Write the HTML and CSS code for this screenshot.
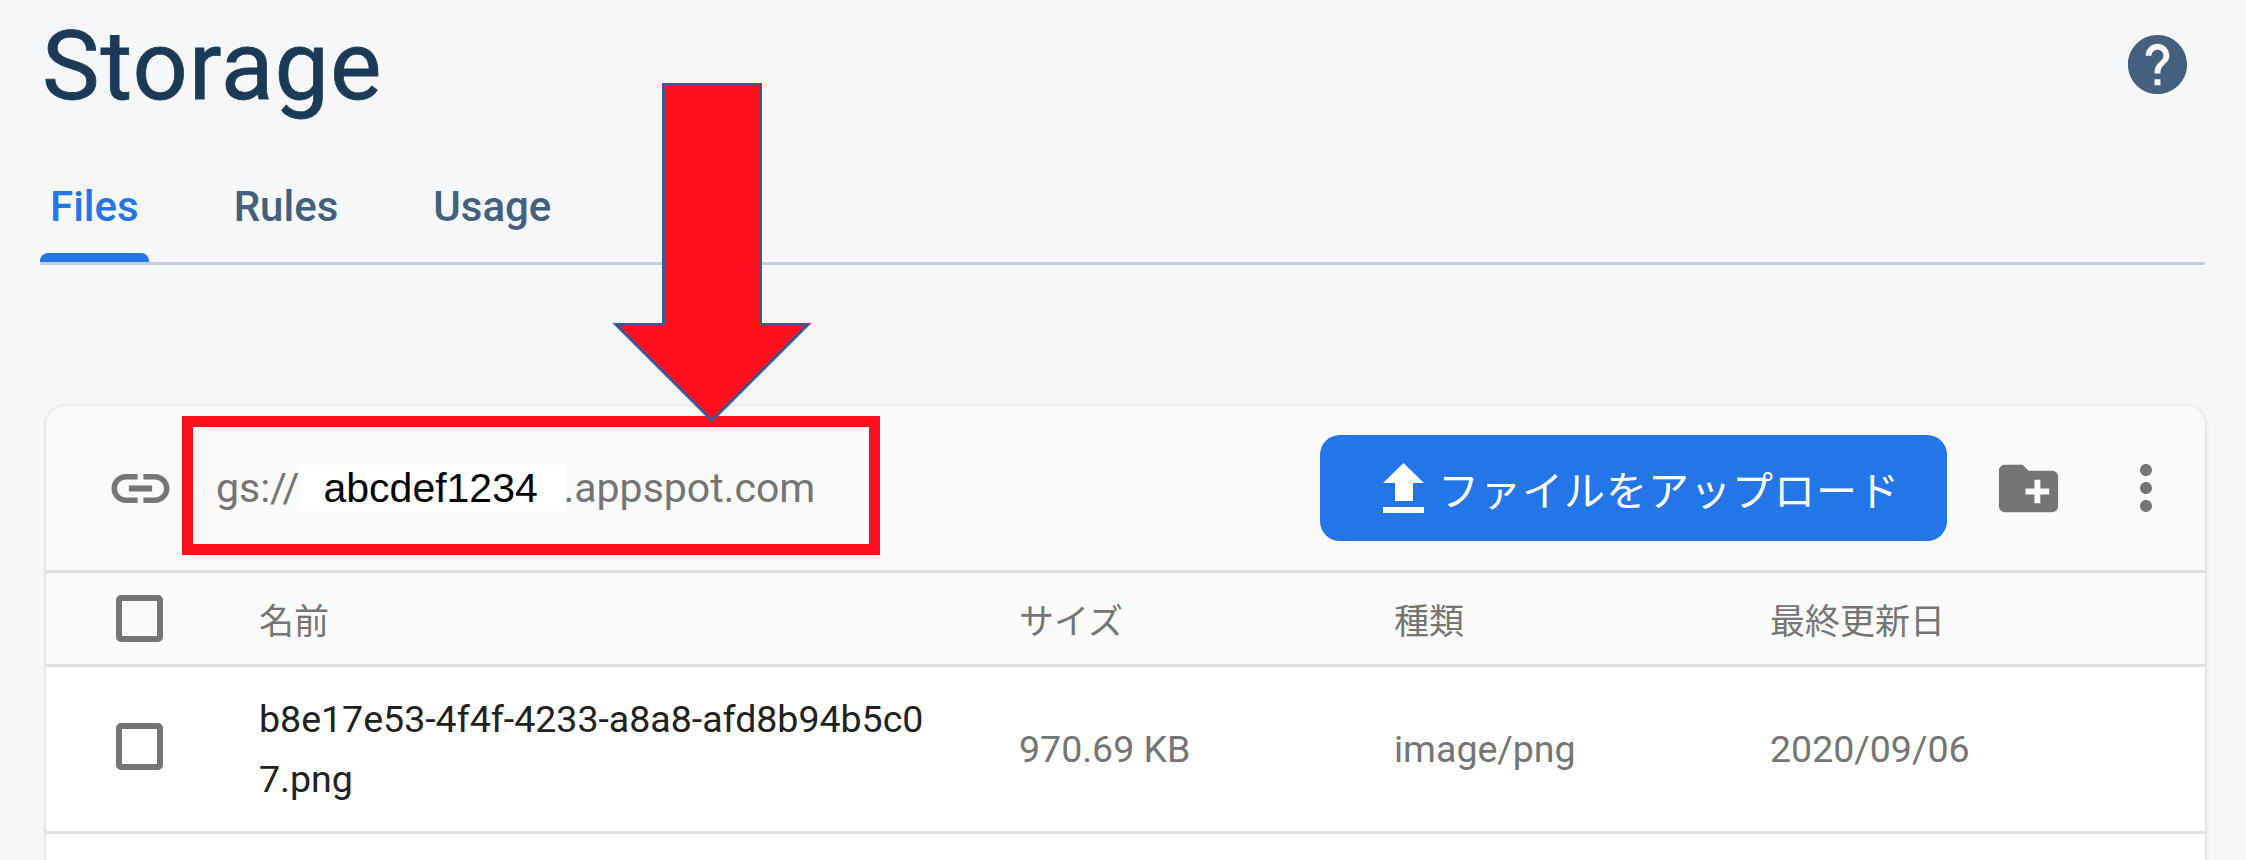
FILE: index.html
```html
<!DOCTYPE html>
<html lang="ja">
<head>
    <meta charset="UTF-8">
    <title>Storage</title>
    <link rel="stylesheet" href="styles.css">
</head>
<body>
    <div class="page">
        <div class="title-row">
            <h1>Storage</h1>
            <svg class="help-icon" viewBox="0 0 24 24"><path d="M12 2C6.48 2 2 6.48 2 12s4.48 10 10 10 10-4.48 10-10S17.52 2 12 2zm1 17h-2v-2h2v2zm2.07-7.75l-.9.92C13.45 12.9 13 13.5 13 15h-2v-.5c0-1.1.45-2.1 1.17-2.83l1.24-1.26c.37-.36.59-.86.59-1.41 0-1.1-.9-2-2-2s-2 .9-2 2H8c0-2.21 1.79-4 4-4s4 1.79 4 4c0 .88-.36 1.68-.93 2.25z"/></svg>
        </div>

        <div class="tabs">
            <div class="tab active">Files</div>
            <div class="tab">Rules</div>
            <div class="tab">Usage</div>
        </div>

        <div class="card">
            <div class="toolbar">
                <svg class="link-icon" viewBox="2 7 20 10"><path d="M3.9 12c0-1.71 1.39-3.1 3.1-3.1h4V7H7c-2.76 0-5 2.24-5 5s2.24 5 5 5h4v-1.9H7c-1.71 0-3.1-1.39-3.1-3.1zM8 13h8v-2H8v2zm9-6h-4v1.9h4c1.71 0 3.1 1.39 3.1 3.1s-1.39 3.1-3.1 3.1h-4V17h4c2.76 0 5-2.24 5-5s-2.24-5-5-5z"/></svg>
                <div class="bucket">
                    <span>gs://</span>
                    <span class="bucket-name">abcdef1234</span>
                    <span>.appspot.com</span>
                </div>
                <button class="upload-btn">
                    <svg class="upload-icon" viewBox="0 0 41 50"><path d="M20.5 0L41 20H30V38H12V20H0z"/><rect x="0" y="44" width="41" height="6"/></svg>
                    ファイルをアップロード
                </button>
                <svg class="folder-icon" viewBox="0 0 24 24"><path d="M20 6h-8l-2-2H4c-1.11 0-1.99.89-1.99 2L2 18c0 1.11.89 2 2 2h16c1.11 0 2-.89 2-2V8c0-1.11-.89-2-2-2zm-1 8h-3v3h-2v-3h-3v-2h3V9h2v3h3v2z"/></svg>
                <svg class="more-icon" viewBox="0 0 24 24"><path d="M12 8c1.1 0 2-.9 2-2s-.9-2-2-2-2 .9-2 2 .9 2 2 2zm0 2c-1.1 0-2 .9-2 2s.9 2 2 2 2-.9 2-2-.9-2-2-2zm0 6c-1.1 0-2 .9-2 2s.9 2 2 2 2-.9 2-2-.9-2-2-2z"/></svg>
            </div>

            <div class="row head-row">
                <div class="check-cell"><div class="checkbox"></div></div>
                <div>名前</div>
                <div>サイズ</div>
                <div>種類</div>
                <div>最終更新日</div>
            </div>

            <div class="row file-row">
                <div class="check-cell"><div class="checkbox"></div></div>
                <div class="file-name">b8e17e53-4f4f-4233-a8a8-afd8b94b5c07.png</div>
                <div>970.69 KB</div>
                <div>image/png</div>
                <div>2020/09/06</div>
            </div>
        </div>

        <div class="red-box"></div>
        <svg class="red-arrow" viewBox="0 0 208 348"><polygon points="55.5,4.5 152.5,4.5 152.5,244.5 200,244.5 104,340.5 8,244.5 55.5,244.5"/></svg>
    </div>
</body>
</html>
```

FILE: styles.css
```css
* {
    box-sizing: border-box;
}

html, body {
    margin: 0;
    height: 100%;
    overflow: hidden;
}

body {
    font-family: Roboto, "Noto Sans CJK JP", sans-serif;
    background-color: #f6f7f9;
}

.page {
    position: relative;
    height: 860px;
    overflow: hidden;
}

/* title */
.title-row {
    display: flex;
    justify-content: space-between;
    height: 130px;
    padding: 29px 53px 0 42px;
}

h1 {
    margin: -8px 0 0;
    font-size: 97px;
    font-weight: 400;
    line-height: 90px;
    letter-spacing: 1px;
    -webkit-text-stroke: 0.8px #1a3a57;
    color: #1a3a57;
}

.help-icon {
    width: 71px;
    height: 71px;
    fill: #45607f;
}

/* tabs */
.tabs {
    display: flex;
    gap: 75px;
    height: 135px;
    margin: 0 41px 0 40px;
    padding-top: 48px;
    border-bottom: 3px solid #c3cfe0;
}

.tab {
    position: relative;
    height: 84px;
    padding: 5px 10px 0;
    font-size: 42px;
    font-weight: 500;
    line-height: 47px;
    color: #43607f;
}

.tab.active {
    color: #2276e8;
}

.tab.active::after {
    content: "";
    position: absolute;
    left: 0;
    right: 0;
    bottom: 0;
    height: 9px;
    background-color: #2276e8;
    border-radius: 8px 8px 0 0;
}

/* card */
.card {
    height: 454px;
    margin: 141px 41px 0 46px;
    background-color: white;
    border-radius: 20px 20px 0 0;
    box-shadow: 0 1px 4px rgba(0, 0, 0, 0.2);
}

.toolbar {
    display: flex;
    align-items: center;
    height: 167px;
    padding-left: 65px;
    background-color: #fafafa;
    border-bottom: 3px solid #e0e0e0;
    border-radius: 20px 20px 0 0;
}

.link-icon {
    width: 59px;
    height: 29px;
    margin-right: 46px;
    fill: #757575;
}

.bucket {
    display: flex;
    align-items: center;
    width: 1103px;
    font-size: 41px;
    color: #757575;
}

.bucket-name {
    width: 267px;
    height: 46px;
    margin-right: -3px;
    padding-left: 24px;
    font-family: "Liberation Sans", sans-serif;
    font-size: 41px;
    line-height: 46px;
    color: black;
    background-color: white;
}

.upload-btn {
    display: flex;
    align-items: center;
    gap: 14px;
    flex-shrink: 0;
    width: 627px;
    height: 106px;
    margin-left: 1px;
    padding: 0 0 0 63px;
    font-family: "Noto Sans CJK JP", sans-serif;
    font-size: 41px;
    letter-spacing: 1px;
    color: white;
    background-color: #2276e8;
    border: none;
    border-radius: 20px;
}

.upload-icon {
    width: 41px;
    height: 50px;
    fill: white;
}

.folder-icon {
    width: 71px;
    height: 71px;
    margin-left: 46px;
    fill: #757575;
}

.more-icon {
    width: 72px;
    height: 72px;
    margin-left: 46px;
    fill: #757575;
}

/* table */
.row {
    display: grid;
    grid-template-columns: 213px 760px 375px 376px 1fr;
    align-items: center;
    font-size: 37.5px;
    color: #757575;
}

.head-row {
    height: 94px;
    font-family: "Noto Sans CJK JP", sans-serif;
    font-size: 35px;
    background-color: #fafafa;
    border-bottom: 3px solid #e0e0e0;
}

.file-row {
    height: 167px;
    font-family: Roboto, sans-serif;
    border-bottom: 3px solid #e0e0e0;
}

.check-cell {
    padding-left: 70px;
}

.file-row .check-cell {
    margin-bottom: 5px;
}

.checkbox {
    width: 47px;
    height: 47px;
    border: 6px solid #757575;
    border-radius: 5px;
}

.file-name {
    width: 680px;
    line-height: 60px;
    color: #212121;
    word-break: break-all;
}

/* annotation drawn over the screenshot */
.red-box {
    position: absolute;
    left: 182px;
    top: 416px;
    width: 698px;
    height: 139px;
    border: 11px solid #ff0f1e;
}

.red-arrow {
    position: absolute;
    left: 608px;
    top: 80px;
    width: 208px;
    height: 348px;
    fill: #ff0f1e;
    stroke: #3a5a94;
    stroke-width: 3;
}
```
